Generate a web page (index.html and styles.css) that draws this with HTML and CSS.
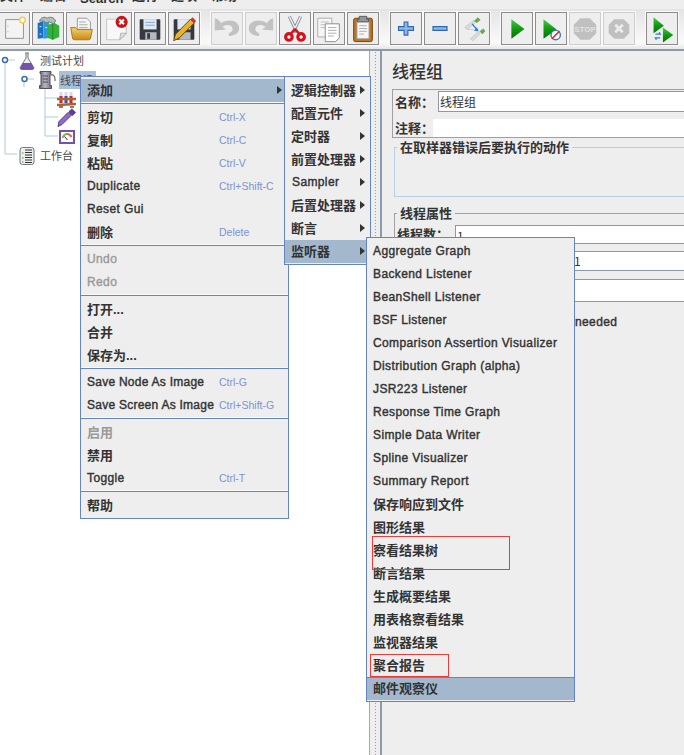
FILE: index.html
```html
<!DOCTYPE html>
<html lang="zh">
<head>
<meta charset="utf-8">
<title>Apache JMeter</title>
<link rel="stylesheet" href="styles.css">
</head>
<body>
<svg class="defs" width="0" height="0" aria-hidden="true"><defs>
  <linearGradient id="gr" x1="0" y1="0" x2="0" y2="1"><stop offset="0" stop-color="#45cc45"/><stop offset=".5" stop-color="#129a12"/><stop offset="1" stop-color="#0a6f0a"/></linearGradient>
  <linearGradient id="fo" x1="0" y1="0" x2="0" y2="1"><stop offset="0" stop-color="#f4d070"/><stop offset="1" stop-color="#c98a18"/></linearGradient>
  <linearGradient id="sp" x1="0" y1="0" x2="1" y2="0"><stop offset="0" stop-color="#5f5d6b"/><stop offset=".45" stop-color="#b9b7c2"/><stop offset="1" stop-color="#6f6d7a"/></linearGradient>
</defs></svg>
<div class="app">
  <div class="menubar"><div class="menubar-in">
    <span class="mb w40">文件</span><span class="mb w40">编辑</span><span class="mb w52 mb-latin">Search</span><span class="mb w39">运行</span><span class="mb w40">选项</span><span class="mb">帮助</span>
  </div></div>
  <div class="toolbar">
    <div class="tgroup">
      <button class="tb tb-first"><svg viewBox="0 0 32 32"><path d="M6 6.500h19v20H6z" fill="#f4f4f4" stroke="#8e8e8e"/><circle cx="24" cy="7" r="3" fill="#fff" stroke="#ecd24c" stroke-width="1.600"/><path d="M8.500 13v1M8.500 19v1" stroke="#999"/></svg></button>
      <button class="tb"><svg viewBox="0 0 32 32"><path d="M5 10l6-2v18l-6 1z" fill="#1d6fc6"/><path d="M11 8l6 1v17l-6 1z" fill="#2f98dc"/><path d="M16 12l7-2 5 3v12l-7 3-5-2z" fill="#35b03a"/><path d="M21 11v17" stroke="#1d8a22"/><path d="M7 8c1-4 6-5 8-3 3-2 8-1 9 3l-2 3-5-2-3 1-3-2z" fill="#b3bdb8" stroke="#717a78"/><path d="M7 14h2M13 15h2M7 22h2" stroke="#dff"/></svg></button>
      <button class="tb"><svg viewBox="0 0 32 32"><path d="M11 5h10l4 4v9H11z" fill="#f4f4f4" stroke="#999"/><path d="M13 9h7M13 12h9M13 15h9" stroke="#aaa"/><path d="M4 15h5l2 2h16l-2 10a2 2 0 0 1-2 1H8a2 2 0 0 1-2-1z" fill="url(#fo)" stroke="#a97710"/></svg></button>
      <button class="tb"><svg viewBox="0 0 32 32"><path d="M6 6h15l6 6v10l-7 6H6z" fill="#f8f8f8" stroke="#c4c4c4"/><path d="M20 28l1-7h6z" fill="#e2e2e2" stroke="#b0b0b0"/><circle cx="22" cy="9" r="6.500" fill="#c5161c"/><path d="M19.500 6.500l5 5M24.500 6.500l-5 5" stroke="#fff" stroke-width="2.200"/></svg></button>
      <button class="tb"><svg viewBox="0 0 32 32"><path d="M5 7a1 1 0 0 1 1-1h20a1 1 0 0 1 1 1v20a1 1 0 0 1-1 1H6a1 1 0 0 1-1-1z" fill="#353a41"/><path d="M9 6h14v11H9z" fill="#dfe9f6"/><path d="M11 9.500h10M11 12.500h10" stroke="#7fa3d0"/><path d="M11 20h12v8H11z" fill="#b4b9be"/><path d="M13 21h3v6h-3z" fill="#353a41"/></svg></button>
      <button class="tb"><svg viewBox="0 0 32 32"><path d="M5 7a1 1 0 0 1 1-1h20a1 1 0 0 1 1 1v20a1 1 0 0 1-1 1H6a1 1 0 0 1-1-1z" fill="#353a41"/><path d="M9 6h14v11H9z" fill="#dfe9f6"/><path d="M11 20h12v8H11z" fill="#b4b9be"/><path d="M5 29l2-7L23 6l4 4-16 16z" fill="#eab12c" stroke="#5e4508"/><path d="M23 6l4 4 2-2-4-4z" fill="#c8383a"/></svg></button>
    </div>
    <div class="tgroup">
      <button class="tb off"><svg viewBox="0 0 32 32"><path d="M3 5v13l12-1-4-3c5-3 11-2 11 3 0 2-2 3-4 4v3c7 0 11-4 11-8 0-8-10-11-19-6L6 6z" fill="#c2c2c2"/></svg></button>
      <button class="tb off"><svg viewBox="0 0 32 32"><path d="M29 5v13l-12-1 4-3c-5-3-11-2-11 3 0 2 2 3 4 4v3c-7 0-11-4-11-8 0-8 10-11 19-6l4-4z" fill="#c2c2c2"/></svg></button>
      <button class="tb"><svg viewBox="0 0 32 32"><path d="M10 3l8 17M22 3l-8 17" stroke="#858b92" stroke-width="3.400"/><path d="M10 3l8 17M22 3l-8 17" stroke="#ececec" stroke-width="1.600"/><circle cx="9.500" cy="25" r="3.500" fill="#fff" stroke="#d5121a" stroke-width="3.400"/><circle cx="22.500" cy="25" r="3.500" fill="#fff" stroke="#d5121a" stroke-width="3.400"/><path d="M12 21l4-4 4 4" fill="none" stroke="#d5121a" stroke-width="2.500"/></svg></button>
      <button class="tb"><svg viewBox="0 0 32 32"><path d="M4 5h15v20H4z" fill="#f6f6f6" stroke="#aaa"/><path d="M7 9h9M7 12h5M7 15h5" stroke="#bbb"/><path d="M12 11h15v15l-4 4H12z" fill="#fff" stroke="#888"/><path d="M15 15h9M15 18h9M15 21h9M15 24h6" stroke="#aaa"/></svg></button>
      <button class="tb"><svg viewBox="0 0 32 32"><rect x="6" y="5" width="20" height="25" rx="2" fill="#bd7520" stroke="#6d4210"/><path d="M9.500 8h13v19H9.500z" fill="#f6f6f6" stroke="#999"/><path d="M12 3h8v3h2v3H10V6h2z" fill="#8f979b" stroke="#555"/><path d="M12 13h8M12 16h8M12 19h8M12 22h5" stroke="#aaa"/></svg></button>
    </div>
    <div class="tgroup">
      <button class="tb"><svg viewBox="0 0 32 32"><path d="M14 9h4v5h6v4h-6v5h-4v-5H8v-4h6z" fill="#8fb6e4" stroke="#2f68b0" stroke-width="1.200"/></svg></button>
      <button class="tb"><svg viewBox="0 0 32 32"><path d="M8.500 14h15v4h-15z" fill="#8fb6e4" stroke="#2f68b0" stroke-width="1.200"/></svg></button>
      <button class="tb"><svg viewBox="0 0 32 32"><path d="M6 15l10-8 2 2-9 8z" fill="#d8ddd8" stroke="#b6bcb6" stroke-width=".6"/><path d="M16 8l4-4 3 3-4 3z" fill="#6aa850"/><path d="M12 27l9-8 2 2-8 8z" fill="#d8ddd8" stroke="#b6bcb6" stroke-width=".6"/><path d="M22 19l4-3 2 3-3 3z" fill="#6aa850"/><path d="M9 17h5l5 2" fill="none" stroke="#c4d0dc"/><path d="M14 11l5 6" stroke="#1c78e8" stroke-width="1.400"/><path d="M21 19l-5-1 3-3z" fill="#1c78e8"/></svg></button>
    </div>
    <div class="tgroup">
      <button class="tb"><svg viewBox="0 0 32 32"><path d="M10 6l14 10.500L10 27z" fill="url(#gr)"/></svg></button>
      <button class="tb"><svg viewBox="0 0 32 32"><path d="M8 6l14 11L8 27z" fill="url(#gr)"/><circle cx="21" cy="23" r="5" fill="#fff" stroke="#3f75bb" stroke-width="1.500"/><path d="M17 27l8-8" stroke="#d82020" stroke-width="1.600"/></svg></button>
      <button class="tb off"><svg viewBox="0 0 32 32"><path d="M11 5h10l7 7v9l-7 7H11l-7-7v-9z" fill="#c0c0c0"/><text x="16" y="19.500" class="stop">STOP</text></svg></button>
      <button class="tb off"><svg viewBox="0 0 32 32"><path d="M11 6h10l6 6v9l-6 6H11l-6-6v-9z" fill="#c0c0c0"/><path d="M12 12l8 8M20 12l-8 8" stroke="#ececec" stroke-width="3"/></svg></button>
    </div>
    <div class="tgroup">
      <button class="tb"><svg viewBox="0 0 32 32"><path d="M7 4l11 9-11 8z" fill="url(#gr)"/><path d="M17 15l11 8-11 8z" fill="url(#gr)"/><path d="M9 22h5l-1-2M14 26H9l1 2" fill="none" stroke="#2f7be0" stroke-width="1.500"/></svg></button>
    </div>
  </div>

  <div class="main">
    <div class="tree">
      <svg class="tree-lines" viewBox="0 0 100 110"><path d="M5 9V103H17M5 9H15M24 28V36M24 28H34M45 37V85M45 47H58M45 66H58M45 85H58" fill="none" stroke="#aec8e2"/><circle cx="5" cy="9" r="2.500" fill="#fff" stroke="#3a6ea8" stroke-width="1.500"/><circle cx="24.500" cy="28" r="2.500" fill="#fff" stroke="#3a6ea8" stroke-width="1.500"/></svg>
      <div class="node lv0"><svg class="ico" viewBox="0 0 16 18"><path d="M6 1h4M7 1v5L1.500 15a1.500 1.500 0 0 0 1 2.500h11a1.500 1.500 0 0 0 1-2.500L9 6V1" fill="#ececf2" stroke="#777"/><path d="M4 11h8l3 5-1 1.500H2L1 16z" fill="#7452ac"/></svg><span class="lbl">测试计划</span></div>
      <div class="node lv1"><svg class="ico spool" viewBox="0 0 18 18"><path d="M2 .500h11v2h-1v12h1.500v3H1.500v-3H3v-12H2z" fill="url(#sp)" stroke="#55535f"/><path d="M5 5h5M5 8h5M5 11h5" stroke="#4d4b57"/><path d="M12 4c3-1 5 1 5 4v2" fill="none" stroke="#777" stroke-width="1.300"/></svg><span class="lbl sel">线程组</span></div>
      <div class="node lv2"><svg class="ico rack" viewBox="0 0 19 17"><path d="M4 1v11M9 1v11M14 1v11" stroke="#d8d8e8" stroke-width="3"/><path d="M4 5v7" stroke="#d0204a" stroke-width="3"/><path d="M9 5v7" stroke="#3a4cc0" stroke-width="3"/><path d="M14 5v7" stroke="#d0204a" stroke-width="3"/><path d="M0 8h19M0 14l19-1" stroke="#a06a24" stroke-width="2.400"/><path d="M2 16h4M13 16h4" stroke="#7c5018" stroke-width="1.500"/></svg></div>
      <div class="node lv2"><svg class="ico drop" viewBox="0 0 19 19"><path d="M1 18.500l1-5 9-9 3 3-9 9z" fill="#8f6cc6" stroke="#4f3d80"/><path d="M12 3l3-2.500 4 4-3 3-1 .5-3.500-3.500z" fill="#5c3f96"/></svg></div>
      <div class="node lv2 lv2b"><svg class="ico gauge" viewBox="0 0 16 14"><path d="M1 1h14v12H1z" fill="#fff" stroke="#7452ac" stroke-width="2"/><path d="M3.500 8c1-3 3-4 4.500-4" fill="none" stroke="#6cbc5c" stroke-width="2"/><path d="M8 4c2 0 3.500 1 4.500 3" fill="none" stroke="#e8604c" stroke-width="2"/><path d="M8.500 10L5.500 6.500" stroke="#222"/></svg></div>
      <div class="node lv0"><svg class="ico" viewBox="0 0 16 18"><rect x="1" y=".500" width="14" height="17" rx="2.500" fill="#eee" stroke="#777"/><path d="M6 3h7M6 5.500h7M6 8h7M6 10.500h7M6 13h7M6 15.500h7" stroke="#333"/><path d="M3 6h1.500M3 11h1.500M3 15h1.500" stroke="#3a3"/></svg><span class="lbl">工作台</span></div>
    </div>
    <div class="split"></div>
    <div class="panel">
      <h1 class="ptitle">线程组</h1>
      <div class="namebox">
        <div class="frow"><label class="flabel w43">名称：</label><div class="field">线程组</div></div>
        <div class="frow f2"><label class="flabel w38">注释：</label><div class="field plain"></div></div>
      </div>
      <fieldset class="group blue"><legend>在取样器错误后要执行的动作</legend></fieldset>
      <fieldset class="group gray"><legend>线程属性</legend>
        <div class="frow f3"><label class="flabel w58">线程数：</label><div class="field">1</div></div>
        <div class="field f4">1</div>
        <div class="field f5"></div>
        <div class="needed">needed</div>
      </fieldset>
    </div>
  </div>

  <div class="menu m1">
    <div class="item hi"><span class="t cjk">添加</span><i class="arrow"></i></div>
    <div class="sep"></div>
    <div class="item"><span class="t cjk">剪切</span><span class="key">Ctrl-X</span></div>
    <div class="item"><span class="t cjk">复制</span><span class="key">Ctrl-C</span></div>
    <div class="item"><span class="t cjk">粘贴</span><span class="key">Ctrl-V</span></div>
    <div class="item"><span class="t">Duplicate</span><span class="key">Ctrl+Shift-C</span></div>
    <div class="item"><span class="t">Reset Gui</span></div>
    <div class="item"><span class="t cjk">删除</span><span class="key">Delete</span></div>
    <div class="sep"></div>
    <div class="item dis"><span class="t">Undo</span></div>
    <div class="item dis"><span class="t">Redo</span></div>
    <div class="sep"></div>
    <div class="item"><span class="t cjk">打开...</span></div>
    <div class="item"><span class="t cjk">合并</span></div>
    <div class="item"><span class="t cjk">保存为...</span></div>
    <div class="sep"></div>
    <div class="item"><span class="t save">Save Node As Image</span><span class="key">Ctrl-G</span></div>
    <div class="item"><span class="t save">Save Screen As Image</span><span class="key">Ctrl+Shift-G</span></div>
    <div class="sep"></div>
    <div class="item dis"><span class="t cjk">启用</span></div>
    <div class="item"><span class="t cjk">禁用</span></div>
    <div class="item"><span class="t">Toggle</span><span class="key">Ctrl-T</span></div>
    <div class="sep"></div>
    <div class="item"><span class="t cjk">帮助</span></div>
  </div>

  <div class="menu m2">
    <div class="item"><span class="t cjk">逻辑控制器</span><i class="arrow"></i></div>
    <div class="item"><span class="t cjk">配置元件</span><i class="arrow"></i></div>
    <div class="item"><span class="t cjk">定时器</span><i class="arrow"></i></div>
    <div class="item"><span class="t cjk">前置处理器</span><i class="arrow"></i></div>
    <div class="item"><span class="t sampler">Sampler</span><i class="arrow"></i></div>
    <div class="item"><span class="t cjk">后置处理器</span><i class="arrow"></i></div>
    <div class="item"><span class="t cjk">断言</span><i class="arrow"></i></div>
    <div class="item hi"><span class="t cjk">监听器</span><i class="arrow"></i></div>
  </div>

  <div class="menu m3">
    <div class="item"><span class="t">Aggregate Graph</span></div>
    <div class="item"><span class="t">Backend Listener</span></div>
    <div class="item"><span class="t">BeanShell Listener</span></div>
    <div class="item"><span class="t">BSF Listener</span></div>
    <div class="item"><span class="t">Comparison Assertion Visualizer</span></div>
    <div class="item"><span class="t">Distribution Graph (alpha)</span></div>
    <div class="item"><span class="t">JSR223 Listener</span></div>
    <div class="item"><span class="t">Response Time Graph</span></div>
    <div class="item"><span class="t">Simple Data Writer</span></div>
    <div class="item"><span class="t">Spline Visualizer</span></div>
    <div class="item"><span class="t">Summary Report</span></div>
    <div class="item"><span class="t cjk">保存响应到文件</span></div>
    <div class="item"><span class="t cjk">图形结果</span></div>
    <div class="item"><span class="t cjk">察看结果树</span></div>
    <div class="item"><span class="t cjk">断言结果</span></div>
    <div class="item"><span class="t cjk">生成概要结果</span></div>
    <div class="item"><span class="t cjk">用表格察看结果</span></div>
    <div class="item"><span class="t cjk">监视器结果</span></div>
    <div class="item"><span class="t cjk">聚合报告</span></div>
    <div class="item hi"><span class="t cjk">邮件观察仪</span></div>
  </div>

  <div class="mark mark-a"></div>
  <div class="mark mark-b"></div>
</div>
</body>
</html>
```

FILE: styles.css
```css
* { box-sizing: border-box; }
html, body { margin: 0; padding: 0; }
body {
  width: 684px;
  height: 755px;
  overflow: hidden;
  background: #eee;
  font-family: "Liberation Sans", "Noto Sans CJK SC", sans-serif;
  color: #333;
}
.defs { position: absolute; }
.app { position: relative; width: 684px; height: 755px; overflow: hidden; display: flex; flex-direction: column; }

.menubar { height: 9px; flex: none; overflow: hidden; background: #eeeeee; }
.menubar-in { display: flex; margin-top: -13px; height: 18px; font: bold 13px/18px "Liberation Sans", "Noto Sans CJK SC", sans-serif; }
.mb { flex: none; }
.mb-latin { margin-top: 3px; }
.w40 { width: 40px; } .w52 { width: 52px; } .w39 { width: 39px; }

.toolbar {
  height: 40px;
  flex: none;
  display: flex;
  align-items: flex-start;
  gap: 11px;
  padding-top: 3px;
  background: linear-gradient(#e4e4e4, #f4f4f4 60%, #fafafa 85%, #e6e6e6);
}
.tgroup { display: flex; gap: 2px; }
.tb {
  width: 32px;
  height: 33px;
  padding: 0;
  background: #eee;
  border: 1px solid #8c8c8c;
  box-shadow: 0 0 0 1px #fafafa;
  display: flex;
  align-items: center;
  justify-content: center;
}
.tb svg { width: 30px; height: 31px; flex: none; display: block; }
.tb-first { width: 30px; border-left: 0; }
.tb.off { border-color: #cdcdcd; }
.stop { font: bold 8.500px "Liberation Sans", sans-serif; fill: #e2e2e2; text-anchor: middle; }

.main {
  flex: 1;
  display: grid;
  grid-template-columns: 370px 10px 1fr;
  border-top: 2px solid #8d9cab;
  min-height: 0;
}
.tree { background: #fff; position: relative; border-right: 1px solid #a8a8a8; display: flex; flex-direction: column; }
.tree-lines { position: absolute; left: 0; top: 0; width: 100px; height: 110px; }
.node { display: flex; align-items: center; gap: 5px; height: 19px; flex: none; position: relative; }
.lv0 { padding-left: 19px; }
.lv1 { padding-left: 38px; gap: 3px; }
.lv2 { padding-left: 57px; }
.lv2b { padding-left: 59px; }
.ico { width: 16px; height: 18px; display: block; flex: none; }
.spool { width: 18px; }
.rack { width: 19px; height: 17px; margin-top: 1px; }
.drop { width: 19px; height: 19px; }
.gauge { width: 16px; height: 14px; }
.lbl { font: 11px/18px "Noto Sans CJK SC", sans-serif; color: #4a4a4a; white-space: nowrap; margin-bottom: 1px; }
.sel { background: #a9c0da; padding: 0 1px; width: 37px; margin-bottom: 0; }

.split {
  background-color: #eee;
  background-image: radial-gradient(circle, #9a9a9a .6px, transparent .9px);
  background-size: 3px 3px;
  background-position: 4px 0;
  background-repeat: repeat-y;
}
.panel { background: #eee; border-left: 2px solid #8d9cab; padding: 8px 0 0 10px; overflow: hidden; }
.ptitle { margin: 0 0 6px; font: 500 17px/24px "Noto Sans CJK SC", sans-serif; color: #333; }
.namebox { border: 1px solid #a0a0a0; border-right: 0; height: 49px; padding: 1px 0 0 2px; margin-right: -4px; }
.frow { display: flex; align-items: center; }
.flabel { font: bold 13px/20px "Noto Sans CJK SC", sans-serif; flex: none; white-space: nowrap; }
.w43 { width: 43px; } .w38 { width: 38px; } .w58 { width: 58px; }
.field { flex: 1; height: 21px; background: #fff; border: 1px solid #8a98a8; border-right: 0; font: 12px/19px "Noto Sans CJK SC", sans-serif; padding-left: 1px; }
.field.plain { border: 0; height: 18px; }
.f2 { margin-top: 6px; }
.group { margin: 0; padding: 0; min-width: 0; border-right: 0; }
.group legend { font: bold 13px/16px "Noto Sans CJK SC", sans-serif; }
.group.blue { margin: 1px -4px 0 2px; height: 58px; border: 1px solid #b8cfe5; border-right: 0; }
.group.blue legend { padding: 0 3px; margin-left: 2px; }
.group.gray { margin: 8px -4px 0 2px; height: 150px; border: 1px solid #a0a0a0; border-right: 0; border-bottom: 0; padding: 3px 0 0 2px; }
.group.gray legend { padding: 0 3px; }
.f3 .field { height: 19px; }
.f4 { margin: 7px 0 0 58px; height: 20px; padding-left: 118px; line-height: 17px; }
.f5 { margin: 8px 0 0 58px; height: 23px; }
.needed { font: 12px/14px "Liberation Sans", sans-serif; -webkit-text-stroke: .4px currentColor; letter-spacing: .38px; margin: 13px 0 0 178px; }

.menu {
  position: absolute;
  background: #eee;
  border: 1px solid #6585c2;
  padding: 2px 0 1px;
  color: #333;
}
.m1 { left: 80px; top: 76px; width: 209px; }
.m2 { left: 284px; top: 76px; width: 87px; }
.m3 { left: 366px; top: 237px; width: 209px; }
.item { height: 23px; display: flex; align-items: center; padding-left: 6px; position: relative; white-space: nowrap; }
.t { font: 12px/23px "Liberation Sans", sans-serif; -webkit-text-stroke: .4px currentColor; letter-spacing: .38px; }
.save { letter-spacing: .25px; }
.cjk { font: bold 13px/23px "Liberation Sans", "Noto Sans CJK SC", sans-serif; -webkit-text-stroke: 0; letter-spacing: 0; }
.sampler { margin-left: 1px; }
.key { position: absolute; left: 138px; font: 10.500px/23px "Liberation Sans", sans-serif; color: #7d93d2; }
.hi { background: #a3b8cd; }
.m3 .hi { box-shadow: inset 0 1px 0 #6585c2; }
.dis { color: #9a9a9a; }
.sep { height: 4px; border-top: 1px solid #fafafa; position: relative; }
.sep::after { content: ""; position: absolute; left: 0; right: 0; top: 0; height: 1px; background: #6585c2; }
.arrow {
  position: absolute;
  right: 6px;
  top: 7px;
  border-left: 5px solid #333;
  border-top: 4px solid transparent;
  border-bottom: 4px solid transparent;
}
.m2 .arrow { right: 5px; }
.mark { position: absolute; border: 1px solid #f03a3a; }
.mark-a { left: 372px; top: 536px; width: 138px; height: 34px; }
.mark-b { left: 370px; top: 654px; width: 79px; height: 23px; }
```
